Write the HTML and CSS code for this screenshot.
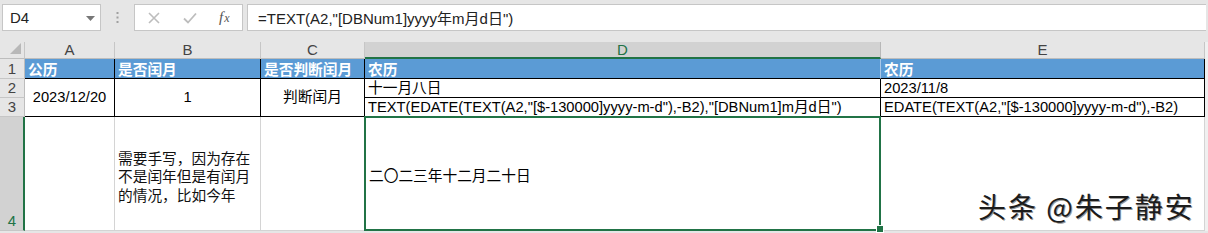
FILE: index.html
```html
<!DOCTYPE html>
<html lang="zh">
<head>
<meta charset="utf-8">
<title>Sheet</title>
<link rel="stylesheet" href="styles.css">
</head>
<body>
<div class="app">
  <div class="toolbar">
    <div class="namebox">
      <span class="name">D4</span>
      <svg class="drop" width="9" height="5" viewBox="0 0 9 5"><path d="M0 0 H9 L4.5 5 Z" fill="#777"/></svg>
    </div>
    <div class="sep">
      <svg width="3" height="11" viewBox="0 0 3 11"><rect x="0.5" y="0" width="2" height="2" fill="#a0a0a0"/><rect x="0.5" y="4.5" width="2" height="2" fill="#a0a0a0"/><rect x="0.5" y="9" width="2" height="2" fill="#a0a0a0"/></svg>
    </div>
    <div class="fxbox">
      <svg class="ico" width="12" height="12" viewBox="0 0 12 12"><path d="M1 1 L11 11 M11 1 L1 11" stroke="#bdbdbd" stroke-width="1.6" fill="none"/></svg>
      <svg class="ico" width="14" height="12" viewBox="0 0 14 12"><path d="M1 6.5 L5 10.5 L13 1.5" stroke="#bdbdbd" stroke-width="1.8" fill="none"/></svg>
      <span class="fx"><i class="f">f</i><i class="x">x</i></span>
    </div>
    <div class="formula">=TEXT(A2,"[DBNum1]yyyy年m月d日")</div>
  </div>

  <div class="sheet">
    <div class="corner"><svg width="11" height="11" viewBox="0 0 11 11"><path d="M11 0 V11 H0 Z" fill="#b8b8b8"/></svg></div>
    <div class="ch">A</div>
    <div class="ch">B</div>
    <div class="ch">C</div>
    <div class="ch ch-sel">D</div>
    <div class="ch">E</div>

    <div class="rh">1</div>
    <div class="c hd">公历</div>
    <div class="c hd">是否闰月</div>
    <div class="c hd">是否判断闰月</div>
    <div class="c hd hd-d">农历</div>
    <div class="c hd">农历</div>

    <div class="rh">2</div>
    <div class="c b m ctr">2023/12/20</div>
    <div class="c b m ctr">1</div>
    <div class="c b m ctr">判断闰月</div>
    <div class="c b">十一月八日</div>
    <div class="c b">2023/11/8</div>

    <div class="rh">3</div>
    <div class="c b">TEXT(EDATE(TEXT(A2,"[$-130000]yyyy-m-d"),-B2),"[DBNum1]m月d日")</div>
    <div class="c b">EDATE(TEXT(A2,"[$-130000]yyyy-m-d"),-B2)</div>

    <div class="rh rh-sel">4</div>
    <div class="c g"></div>
    <div class="c g wrap">需要手写，因为存在不是闰年但是有闰月的情况，比如今年</div>
    <div class="c g"></div>
    <div class="c g sel">二〇二三年十二月二十日</div>
    <div class="c g"></div>
  </div>

  <div class="watermark">头条 @朱子静安</div>
</div>
</body>
</html>
```

FILE: styles.css
```css
* { box-sizing: border-box; }
html, body { margin: 0; padding: 0; }
body {
  width: 1208px;
  height: 233px;
  overflow: hidden;
  background: #e6e6e6;
  font-family: "Liberation Sans", "Noto Sans CJK SC", sans-serif;
  font-size: 14.7px;
  color: #000;
}
.app { position: relative; width: 1208px; height: 233px; }

.toolbar {
  height: 42px;
  padding-top: 4px;
  display: flex;
  align-items: flex-start;
}
.namebox {
  margin-left: 2px;
  width: 99px;
  height: 27px;
  background: #fff;
  border: 1px solid #c6c6c6;
  display: flex;
  align-items: center;
  justify-content: space-between;
  padding: 0 5px 0 7px;
  font-size: 15px;
  color: #222;
}
.drop { margin-top: 1px; }
.sep {
  width: 33px;
  height: 27px;
  display: flex;
  align-items: center;
  justify-content: center;
}
.fxbox {
  width: 109px;
  height: 27px;
  background: #fff;
  border: 1px solid #c6c6c6;
  display: flex;
  align-items: center;
  padding-left: 13px;
}
.fxbox .ico { margin-right: 23px; }
.fxbox .ico + .ico { margin-right: 22px; }
.fx {
  font-family: "Liberation Serif", serif;
  color: #555;
  font-size: 15px;
  line-height: 1;
}
.fx .x { font-size: 12px; margin-left: 1px; }
.formula {
  margin-left: 4px;
  width: 959px;
  height: 27px;
  background: #fff;
  border: 1px solid #c6c6c6;
  border-right: none;
  display: flex;
  align-items: center;
  padding-left: 10px;
  font-size: 15px;
  color: #222;
  white-space: nowrap;
}

.sheet {
  display: grid;
  grid-template-columns: 25px 90px 146px 104px 516px 324px;
  grid-template-rows: 17px 20px 19px 19px 114px;
  width: 1208px;
  background: #fff;
  border-right: 3px solid #f0f0f0;
}

.corner {
  background: #e6e6e6;
  border-right: 1px solid #c6c6c6;
  border-bottom: 1px solid #bdbdbd;
  display: flex;
  align-items: flex-end;
  justify-content: flex-end;
  padding: 0 3px 4px 0;
}
.ch {
  background: #e6e6e6;
  border-right: 1px solid #c6c6c6;
  border-bottom: 1px solid #bdbdbd;
  display: flex;
  align-items: center;
  justify-content: center;
  color: #444;
  font-size: 15px;
  line-height: 16px;
}
.ch-sel {
  background: #d2d2d2;
  color: #217346;
  border-bottom: 2px solid #217346;
  border-right-color: #b8b8b8;
}
.rh {
  background: #e6e6e6;
  border-right: 1px solid #bdbdbd;
  border-bottom: 1px solid #c6c6c6;
  display: flex;
  align-items: flex-end;
  justify-content: center;
  color: #444;
  font-size: 15px;
  line-height: 18px;
}
.rh-sel {
  background: #d2d2d2;
  color: #217346;
  border-right: 2px solid #217346;
  padding-left: 1px;
}

.c {
  border-right: 1px solid #000;
  border-bottom: 1px solid #000;
  display: flex;
  align-items: center;
  padding: 0 3px;
  white-space: nowrap;
  line-height: 17px;
  min-width: 0;
}
.hd {
  background: #5b9bd5;
  color: #fff;
  font-weight: bold;
  font-family: "Noto Sans CJK SC", sans-serif;
}
.hd-d { border-right-color: #a9c8e8; }
.m { grid-row: span 2; }
.ctr { justify-content: center; }
.g {
  border-right: 1px solid #d4d4d4;
  border-bottom: 1px solid #d4d4d4;
  padding-top: 6px;
}
.wrap {
  white-space: normal;
  line-height: 18.5px;
  padding-left: 3px;
  padding-right: 6px;
  font-family: "Noto Sans CJK SC", sans-serif;
  color: #111;
}
.sel {
  position: relative;
  padding-left: 4px;
}
.sel::after {
  content: "";
  position: absolute;
  left: -1px;
  top: -1px;
  right: -1px;
  bottom: -1px;
  border: 2px solid #217346;
  pointer-events: none;
}
.sel::before {
  content: "";
  position: absolute;
  right: -4px;
  bottom: -3px;
  width: 6px;
  height: 6px;
  background: #217346;
  border: 1px solid #fff;
  z-index: 2;
}

.watermark {
  position: absolute;
  left: 978px;
  top: 190px;
  font-family: "Noto Sans CJK SC", sans-serif;
  font-size: 28px;
  line-height: 32px;
  color: #1c1c1c;
  letter-spacing: 2px;
  text-shadow: 1px 1px 0 #9a9a9a, -1px 0 0 #fff;
  white-space: nowrap;
}
```
